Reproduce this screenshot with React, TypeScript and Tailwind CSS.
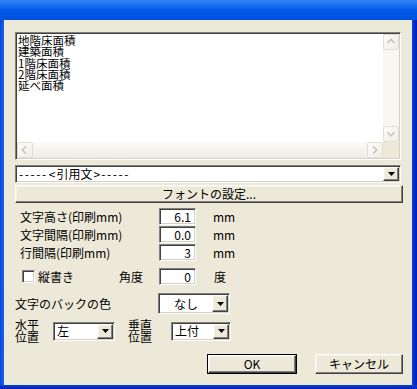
const sunken =
  'border border-t-[#808080] border-l-[#808080] border-b-white border-r-white shadow-[inset_1px_1px_0_#404040,inset_-1px_-1px_0_#d4d0c8] bg-white';
const raised =
  'border border-t-white border-l-white border-b-[#404040] border-r-[#404040] shadow-[inset_-1px_-1px_0_#808080,inset_1px_1px_0_#f4f2e8] bg-[#ECE9D8]';

const DropArrow = () => (
  <div className={`${raised} w-[16px] h-full flex items-center justify-center shrink-0`}>
    <svg width="7" height="4" viewBox="0 0 7 4">
      <path d="M0 0h7L3.5 4z" fill="#000" />
    </svg>
  </div>
);

const ScrollBtn = ({ dir }: { dir: 'up' | 'down' | 'left' | 'right' }) => {
  const paths = {
    up: 'M4 9l4-4 4 4',
    down: 'M4 6l4 4 4-4',
    left: 'M9 4l-4 4 4 4',
    right: 'M6 4l4 4-4 4',
  };
  return (
    <div className="w-[16px] h-[16px] shrink-0 rounded-[2px] border border-[#e2e0d6] bg-linear-to-br from-[#fbfbf8] to-[#efeee6] flex items-center justify-center">
      <svg width="16" height="16" viewBox="0 0 16 16">
        <path d={paths[dir]} fill="none" stroke="#c9c7bc" strokeWidth="2" />
      </svg>
    </div>
  );
};

const Field = ({ value }: { value: string }) => (
  <div className={`${sunken} w-[37px] h-[17px] flex items-center justify-end pr-[4px] leading-[12px]`}>{value}</div>
);

const Combo = ({ text, w, h, center }: { text: React.ReactNode; w: string; h: string; center?: boolean }) => (
  <div className={`${sunken} ${w} ${h} flex items-stretch p-[1px]`}>
    <div className={`flex-1 flex items-center leading-[12px] ${center ? 'justify-center' : 'pl-[2px]'}`}>{text}</div>
    <DropArrow />
  </div>
);

export default function App() {
  const items = ['地階床面積', '建築面積', '1階床面積', '2階床面積', '延べ面積'];
  return (
    <div
      className="w-[417px] h-[389px] flex flex-col text-[12px] text-black overflow-hidden"
      style={{ fontFamily: '"Noto Sans CJK JP", "Liberation Sans", sans-serif' }}
    >
      <div className="h-[20px] shrink-0 bg-linear-to-b from-[#3585f4] via-[#0058ea] to-[#0051df]" />
      <div className="flex flex-1 min-h-0">
        <div className="w-[4px] bg-linear-to-r from-[#0a48d8] to-[#1662ec]" />
        <div className="flex-1 bg-[#ECE9D8] flex flex-col pl-[11px] pt-[12px]">
          {/* list box */}
          <div className={`${sunken} w-[386px] h-[128px] p-[1px] flex flex-col`}>
            <div className="flex flex-1 min-h-0">
              <div className="flex-1 pl-[1px] pt-[1px] text-[11.5px] leading-[11.3px] whitespace-pre">
                {items.map((t) => (
                  <div key={t} className="h-[11.3px]">{t}</div>
                ))}
              </div>
              <div className="w-[16px] flex flex-col justify-between bg-[#f7f6f0]">
                <ScrollBtn dir="up" />
                <ScrollBtn dir="down" />
              </div>
            </div>
            <div className="flex h-[16px]">
              <div className="flex-1 flex justify-between bg-linear-to-b from-[#fbfbf7] to-[#eeede4]">
                <ScrollBtn dir="left" />
                <ScrollBtn dir="right" />
              </div>
              <div className="w-[16px] bg-[#ECE9D8]" />
            </div>
          </div>

          <div className="mt-[5px]">
            <Combo
              text={
                <>
                  <span className="tracking-[1.6px]">-----</span>
                  <span className="mx-[1px]">&lt;</span>引用文<span className="mx-[1px]">&gt;</span>
                  <span className="tracking-[1.6px]">-----</span>
                </>
              }
              w="w-[386px]"
              h="h-[18px]"
            />
          </div>

          <div className={`${raised} mt-[2px] w-[388px] h-[18px] flex items-center justify-center leading-[12px]`}>
            フォントの設定...
          </div>

          <div className="mt-[5px] flex flex-col gap-[1px] pl-[5px]">
            {[
              ['文字高さ(印刷mm)', '6.1'],
              ['文字間隔(印刷mm)', '0.0'],
              ['行間隔(印刷mm)', '3'],
            ].map(([l, v]) => (
              <div key={l} className="flex items-center h-[17px]">
                <div className="w-[139px] leading-[12px]">{l}</div>
                <Field value={v} />
                <div className="ml-[17px] leading-[12px]">mm</div>
              </div>
            ))}
          </div>

          <div className="mt-[7px] flex items-center h-[17px]">
            <div className={`${sunken} ml-[7px] w-[13px] h-[13px]`} />
            <div className="ml-[3px] w-[81px] leading-[12px]">縦書き</div>
            <div className="w-[40px] leading-[12px]">角度</div>
            <Field value="0" />
            <div className="ml-[18px] leading-[12px]">度</div>
          </div>

          <div className="mt-[8px] flex items-center h-[21px]">
            <div className="w-[143px] leading-[12px]">文字のバックの色</div>
            <Combo text="なし" w="w-[72px]" h="h-[21px]" center />
          </div>

          <div className="mt-[4px] flex items-center h-[26px]">
            <div className="w-[38px] leading-[12.5px]">
              水平
              <br />
              位置
            </div>
            <Combo text="左" w="w-[62px]" h="h-[19px]" />
            <div className="ml-[13px] w-[43px] leading-[12.5px]">
              垂直
              <br />
              位置
            </div>
            <Combo text="上付" w="w-[60px]" h="h-[19px]" />
          </div>

          <div className="mt-[10px] flex pl-[192px] gap-[18px]">
            <div className="w-[90px] h-[20px] border border-black">
              <div className={`${raised} w-full h-full flex items-center justify-center leading-[12px]`}>OK</div>
            </div>
            <div className={`${raised} w-[88px] h-[20px] flex items-center justify-center leading-[12px]`}>
              キャンセル
            </div>
          </div>
        </div>
        <div className="w-[5px] bg-linear-to-r from-[#0b3fd8] to-[#001ab8]" />
      </div>
      <div className="h-[4px] shrink-0 bg-linear-to-b from-[#0b40d6] to-[#0020b8]" />
    </div>
  );
}
